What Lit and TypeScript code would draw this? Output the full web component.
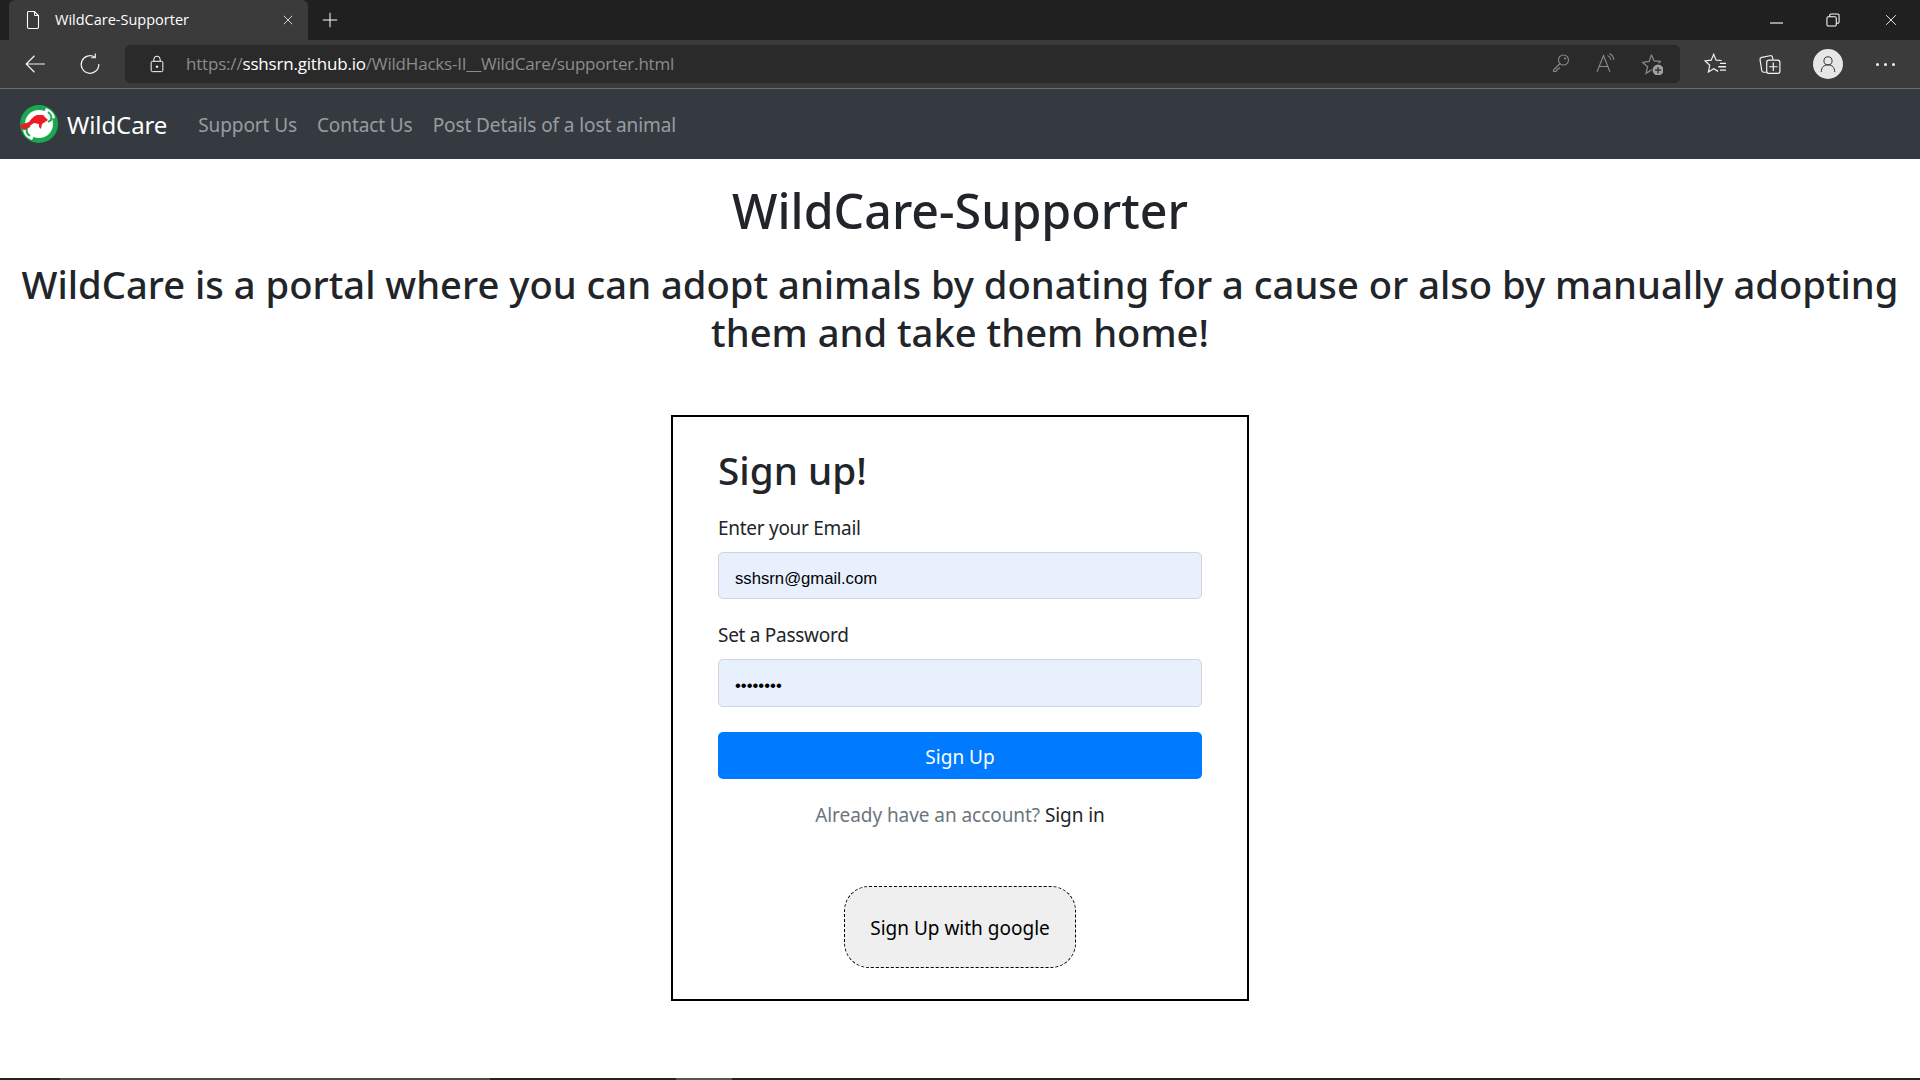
import { LitElement, html, css, svg } from 'lit';
import { customElement } from 'lit/decorators.js';

const stroke = (body: unknown, size = 20, box = 20) => html`<svg
  width=${size}
  height=${size}
  viewBox="0 0 ${box} ${box}"
  fill="none"
  stroke="currentColor"
  stroke-width="1.1"
>
  ${body}
</svg>`;

const icons = {
  page: svg`<path d="M4.500 2.500a1 1 0 0 1 1-1h6l4 4v11.500a1.500 1.500 0 0 1-1.500 1.500H6a1.500 1.500 0 0 1-1.500-1.500z"/><path d="M11.500 1.500v3a1 1 0 0 0 1 1h3"/>`,
  close: svg`<path d="M4 4l12 12M16 4L4 16"/>`,
  plus: svg`<path d="M10 2v16M2 10h16"/>`,
  back: svg`<path d="M19 10H2M9.500 2.500L2 10l7.500 7.500"/>`,
  reload: svg`<path d="M14.500 3.800A8 8 0 1 0 18 10"/><path d="M14.800 0.500v3.800h-3.800"/>`,
  lock: svg`<rect x="3.500" y="7" width="13" height="11.500" rx="1.500"/><path d="M6.500 7V4.800a3.500 3.500 0 0 1 7 0V7"/><circle cx="10" cy="13" r="0.900" fill="currentColor"/>`,
  key: svg`<circle cx="12.500" cy="7" r="5"/><path d="M9 10.500l-6.500 6.500v1.500h2.500l1-1v-1.500h1.500l1.500-1.500"/><circle cx="14" cy="5.500" r="0.500" fill="currentColor"/>`,
  read: svg`<path d="M1 19L7.500 2.500 14 19M3.500 13.500h8"/><path d="M11.500 2.500a6 6 0 0 1 3.500 4.500M13.500 0.500a9 9 0 0 1 4.500 6.500"/>`,
  starAdd: svg`<path d="M9.500 1.500l2.400 5.600 6.100.5M9.800 15.200l-5.200 3.300 1.400-6L1.500 8.500l6-.8 2-6.200"/><path d="M18 7.600l-2 1.700"/><circle cx="15.500" cy="15.500" r="5" fill="#a0a0a0" stroke="none"/><path d="M15.500 12.700v5.600M12.700 15.500h5.600" stroke="#333" stroke-width="1.300"/>`,
  favs: svg`<path d="M16 6.800l-5-.3L8.800 1.200 6.500 6.500 1 7.200l4.200 4-1.200 6 4.800-3 4 2.500"/><path d="M14.500 9.500h6M13 12.500h7.500M14.500 15.500h6" stroke-width="1.200"/>`,
  collections: svg`<path d="M7 17.500H4.500a2 2 0 0 1-2-1.500L1 6.500a2 2 0 0 1 1.500-2.500l7.500-1.500a2 2 0 0 1 2.300 1.500l.4 2"/><rect x="7" y="6.500" width="12" height="12" rx="2"/><path d="M13 8.700v7.600M9.200 12.500h7.600"/>`,
  user: svg`<circle cx="10" cy="6.500" r="4.500"/><path d="M2.500 19c0-5.500 3-8 7.500-8s7.500 2.500 7.500 8"/>`,
  minimize: svg`<path d="M1 10h13"/>`,
  restore: svg`<rect x="1" y="4" width="10" height="10" rx="1.500"/><path d="M4 4V2.500A1.500 1.500 0 0 1 5.500 1h7A1.500 1.500 0 0 1 14 2.500v7a1.500 1.500 0 0 1-1.500 1.500H11"/>`,
};

@customElement('app-root')
export class AppRoot extends LitElement {
  static styles = css`
    :host {
      display: flex;
      flex-direction: column;
      height: 1080px;
      overflow: hidden;
      background: #fff;
      font-family: 'Noto Sans', 'Open Sans', sans-serif;
      font-size: 19px;
      letter-spacing: -0.1px;
      color: #212529;
    }
    svg {
      display: block;
      flex: none;
    }

    /* browser chrome */
    .tabbar {
      height: 40px;
      flex: none;
      background: #202020;
      display: flex;
      align-items: flex-end;
      padding-left: 9px;
      color: #fff;
    }
    .tab {
      width: 299px;
      height: 40px;
      box-sizing: border-box;
      background: #3b3b3b;
      border-radius: 6px 6px 0 0;
      display: flex;
      align-items: center;
      padding: 0 13px 0 14px;
      font-family: 'Open Sans', sans-serif;
      font-size: 14.5px;
      letter-spacing: 0;
    }
    .tab-title {
      flex: 1;
      margin: -2px 0 0 12px;
    }
    .new-tab {
      align-self: center;
      margin-left: 13px;
    }
    .win-buttons {
      margin-left: auto;
      display: flex;
      align-self: center;
      align-items: center;
      gap: 43px;
      padding-right: 21px;
    }
    .toolbar {
      height: 49px;
      flex: none;
      box-sizing: border-box;
      background: #3b3b3b;
      border-bottom: 1px solid #6e6e6e;
      display: flex;
      align-items: center;
      color: #f2f2f2;
    }
    .nav-btns {
      width: 125px;
      display: flex;
      gap: 33px;
      padding-left: 24px;
      box-sizing: border-box;
    }
    .address {
      width: 1555px;
      height: 38px;
      box-sizing: border-box;
      background: #2a2a2a;
      border-radius: 5px;
      display: flex;
      align-items: center;
      padding: 0 17px 0 22px;
      font-family: 'Open Sans', sans-serif;
      font-size: 17px;
      letter-spacing: -0.19px;
      color: #8c8c8c;
    }
    .address b {
      font-weight: 400;
      color: #fff;
    }
    .lock {
      color: #fff;
      margin-left: 1px;
    }
    .url {
      margin: -2px 0 0 20px;
      flex: 1;
    }
    .addr-icons {
      display: flex;
      gap: 25px;
      color: #8a8a8a;
    }
    .tools {
      flex: 1;
      display: flex;
      align-items: center;
      padding-left: 24px;
      gap: 33px;
    }
    .avatar {
      width: 30px;
      height: 30px;
      border-radius: 50%;
      background: #e6e6e6;
      color: #333;
      display: flex;
      align-items: center;
      justify-content: center;
      margin-left: -1px;
    }
    .dots {
      display: flex;
      gap: 5px;
    }
    .dots i {
      width: 3px;
      height: 3px;
      border-radius: 50%;
      background: #f2f2f2;
    }

    /* site navbar */
    .navbar {
      height: 70px;
      flex: none;
      background: #343a40;
      display: flex;
      align-items: center;
      padding-left: 20px;
    }
    .brand {
      display: flex;
      align-items: center;
      gap: 9px;
      color: #fff;
      font-size: 24px;
      margin-right: 31px;
    }
    .navbar a {
      color: rgba(255, 255, 255, 0.5);
      margin-right: 20px;
      padding-top: 2px;
    }

    /* page */
    h1,
    h2,
    h3 {
      margin: 0;
      font-weight: 500;
      text-align: center;
      letter-spacing: 0;
    }
    h1 {
      font-size: 48.3px;
      line-height: 58px;
      margin-top: 22px;
    }
    h2 {
      font-size: 38.180px;
      line-height: 48px;
      margin-top: 21px;
    }
    .card {
      width: 578px;
      height: 586px;
      flex: none;
      box-sizing: border-box;
      border: 2px solid #000;
      margin: 59px auto 0;
      padding: 29px 45px 0;
      display: flex;
      flex-direction: column;
    }
    h3 {
      font-size: 38.700px;
      line-height: 48px;
      text-align: left;
    }
    label {
      line-height: 30px;
      letter-spacing: -0.28px;
    }
    .field-label {
      margin-top: 19px;
    }
    .field-label.second {
      margin-top: 21px;
    }
    .input {
      height: 47px;
      margin-top: 9px;
      box-sizing: border-box;
      background: #e8f0fe;
      border: 1px solid #ced4da;
      border-radius: 5px;
      display: flex;
      align-items: center;
      padding: 7px 15px 0 16px;
      font-family: 'Liberation Sans', sans-serif;
      font-size: 16.700px;
      letter-spacing: 0;
      color: #000;
    }
    .input.second {
      height: 48px;
      padding-top: 5px;
    }
    .submit {
      height: 47px;
      flex: none;
      box-sizing: border-box;
      padding-top: 2px;
      margin-top: 25px;
      background: #007bff;
      border-radius: 5px;
      color: #fff;
      display: flex;
      align-items: center;
      justify-content: center;
      letter-spacing: 0;
    }
    .hint {
      margin-top: 21px;
      text-align: center;
      line-height: 30px;
      letter-spacing: -0.06px;
      color: #6c757d;
    }
    .hint a {
      color: #212529;
    }
    .google {
      align-self: center;
      width: 232px;
      height: 82px;
      flex: none;
      margin-top: 56px;
      box-sizing: border-box;
      padding-top: 2px;
      border: 1px dashed #000;
      border-radius: 25px;
      background: #efefef;
      color: #000;
      letter-spacing: 0;
      display: flex;
      align-items: center;
      justify-content: center;
    }
    .taskbar {
      margin-top: auto;
      height: 2px;
      flex: none;
      background: #262220;
      display: flex;
    }
    .taskbar i {
      display: block;
    }
    .task-open {
      margin-left: 60px;
      width: 430px;
      background: #4a4a4a;
    }
    .task-active {
      margin-left: 186px;
      width: 56px;
      background: #555;
    }
  `;

  render() {
    return html`
      <div class="tabbar">
        <div class="tab">
          ${stroke(icons.page)}
          <span class="tab-title">WildCare-Supporter</span>
          ${stroke(icons.close, 14)}
        </div>
        <div class="new-tab">${stroke(icons.plus, 18)}</div>
        <div class="win-buttons">
          ${stroke(icons.minimize, 14, 14)} ${stroke(icons.restore, 14, 15)}
          ${stroke(icons.close, 16)}
        </div>
      </div>
      <div class="toolbar">
        <div class="nav-btns">${stroke(icons.back, 22)} ${stroke(icons.reload, 22)}</div>
        <div class="address">
          <span class="lock">${stroke(icons.lock, 18)}</span>
          <span class="url">https://<b>sshsrn.github.io</b>/WildHacks-II__WildCare/supporter.html</span>
          <div class="addr-icons">${stroke(icons.key)} ${stroke(icons.read)} ${stroke(icons.starAdd, 22)}</div>
        </div>
        <div class="tools">
          ${stroke(icons.favs, 22)} ${stroke(icons.collections, 22)}
          <div class="avatar">${stroke(icons.user, 18)}</div>
          <div class="dots"><i></i><i></i><i></i></div>
        </div>
      </div>
      <nav class="navbar">
        <div class="brand">
          <svg width="38" height="38" viewBox="0 0 38 38">
            <circle cx="19" cy="19" r="19" fill="#1aa84f" />
            <circle cx="19" cy="19" r="14" fill="#fff" />
            <path d="M26 3c5 2 8 5 9 10l-5 1c0-3-2-6-6-7z" fill="#fff" />
            <path d="M12 35c-5-2-8-5-9-10l5-1c0 3 2 6 6 7z" fill="#fff" />
            <path d="M28 7c3 2 4 5 3 8l-3 2" fill="none" stroke="#1aa84f" stroke-width="2" />
            <path d="M10 31c-3-2-4-5-3-8l3-2" fill="none" stroke="#1aa84f" stroke-width="2" />
            <path
              d="M0 20l9-3c2-3 5-6 8-7h6l5 5-3 2-3 2-1 5-2-2v-3l-5-1c-4 2-6 5-9 7l-4-2z"
              fill="#ed1c24"
            />
          </svg>
          WildCare
        </div>
        <a>Support Us</a>
        <a>Contact Us</a>
        <a>Post Details of a lost animal</a>
      </nav>
      <h1>WildCare-Supporter</h1>
      <h2>WildCare is a portal where you can adopt animals by donating for a cause or also by manually adopting them and take them home!</h2>
      <div class="card">
        <h3>Sign up!</h3>
        <label class="field-label">Enter your Email</label>
        <div class="input">sshsrn@gmail.com</div>
        <label class="field-label second">Set a Password</label>
        <div class="input second">••••••••</div>
        <div class="submit">Sign Up</div>
        <div class="hint">Already have an account? <a>Sign in</a></div>
        <div class="google">Sign Up with google</div>
      </div>
      <div class="taskbar">
        <i class="task-open"></i>
        <i class="task-active"></i>
      </div>
    `;
  }
}
